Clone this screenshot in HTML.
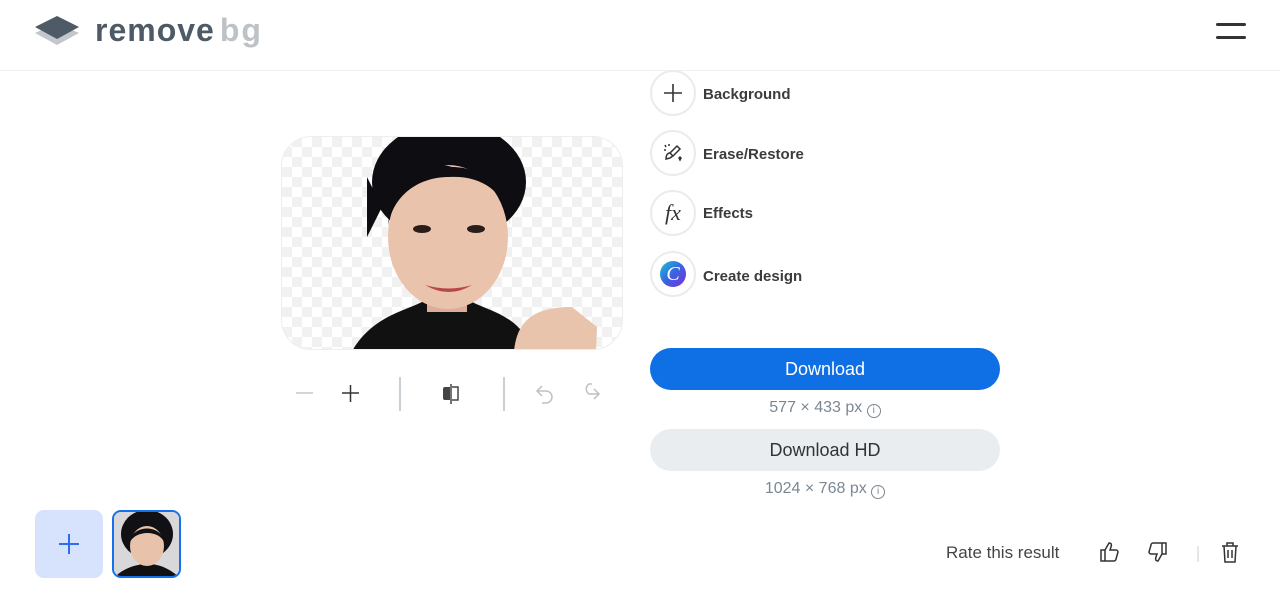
<!DOCTYPE html>
<html><head><meta charset="utf-8"><style>
*{margin:0;padding:0;box-sizing:border-box}
body{width:1280px;height:592px;background:#fff;font-family:"Liberation Sans",sans-serif;position:relative;overflow:hidden;color:#454545}
.hdr{position:absolute;left:0;top:0;width:1280px;height:71px;border-bottom:1px solid #f0f0f0}
.abs{position:absolute}
.circ{position:absolute;left:650px;width:46px;height:46px;border-radius:50%;border:2px solid #e9ecef;display:flex;align-items:center;justify-content:center}
.lbl{position:absolute;left:703px;font-size:15px;font-weight:bold;color:#3c3c3c}
.chk{background-color:#fff;background-image:linear-gradient(45deg,#f1f1f1 25%,transparent 25%,transparent 75%,#f1f1f1 75%),linear-gradient(45deg,#f1f1f1 25%,transparent 25%,transparent 75%,#f1f1f1 75%);background-size:20px 20px;background-position:0 0,10px 10px}
</style></head><body>
<div class="hdr"></div>
<svg class="abs" style="left:33px;top:14px" width="48" height="34" viewBox="0 0 48 34"><path d="M2 19 L24 9 L46 19 L24 31Z" fill="#c3c7cb"/><path d="M2 13 L24 2 L46 13 L24 25Z" fill="#4e5a65"/></svg>
<div class="abs" style="left:95px;top:12px;font-size:32px;font-weight:bold;color:#4e5a65;letter-spacing:1px">remove<span style="color:#bdc2c7;margin-left:5px;letter-spacing:2px">bg</span></div>
<div class="abs" style="left:1216px;top:23px;width:30px;height:3px;background:#333;border-radius:2px"></div>
<div class="abs" style="left:1216px;top:36px;width:30px;height:3px;background:#333;border-radius:2px"></div>

<div class="abs chk" style="left:281px;top:136px;width:342px;height:214px;border-radius:30px;overflow:hidden;border:1px solid #eee">
<svg width="342" height="214" viewBox="0 0 342 214" style="position:absolute;left:0;top:0">
<path d="M70 214 C90 180 120 175 140 165 L190 165 C210 175 240 180 250 214Z" fill="#111"/>
<path d="M232 214 C235 185 250 170 290 170 L315 190 L314 214Z" fill="#e8c4ad"/>
<rect x="145" y="130" width="40" height="45" fill="#dcae95"/>
<ellipse cx="167" cy="45" rx="77" ry="60" fill="#0d0d12"/>
<path d="M85 100 L85 40 L100 70Z" fill="#0d0d12"/>
<ellipse cx="166" cy="100" rx="60" ry="72" fill="#eac3ad"/>
<path d="M106 90 C110 40 140 20 170 30 C200 30 225 50 228 90 C225 55 200 38 167 40 C135 40 110 60 106 90Z" fill="#0d0d12"/>
<ellipse cx="140" cy="92" rx="9" ry="4" fill="#2a1d19"/><ellipse cx="194" cy="92" rx="9" ry="4" fill="#2a1d19"/>
<path d="M143 148 Q167 162 190 148 Q167 155 143 148Z" fill="#b5474a"/>
</svg></div>

<svg class="abs" style="left:280px;top:375px" width="340" height="38" viewBox="0 0 340 38">
<path d="M16 18h17" stroke="#c5c5c5" stroke-width="1.5"/>
<path d="M62 18h17M70.5 10v17" stroke="#333" stroke-width="1.5"/>
<path d="M120 2v34M224 2v34" stroke="#aeb5bc" stroke-width="1.3"/>
<path d="M170 12h-5a2 2 0 0 0-2 2v9a2 2 0 0 0 2 2h5z" fill="#444"/><path d="M172 12h6v13h-6" stroke="#444" stroke-width="1.5" fill="none"/><path d="M171 9v20" stroke="#444" stroke-width="1.5"/>
<path d="M262 11l-5 5 5 5M257 16h9a6 6 0 0 1 0 12h-4" stroke="#c0c0c0" stroke-width="1.5" fill="none"/>
<path d="M314 14l5 5-5 5M319 19h-10a6 6 0 0 1 0-10h3" stroke="#c0c0c0" stroke-width="1.5" fill="none"/>
</svg>

<div class="circ" style="top:70px"><svg width="20" height="20"><path d="M10 1v18M1 10h18" stroke="#333" stroke-width="1.6"/></svg></div>
<div class="lbl" style="top:86px">Background</div>
<div class="circ" style="top:130px"><svg width="24" height="24" viewBox="0 0 24 24" fill="none" stroke="#333" stroke-width="1.5"><path d="M16 5l3 3-7 7-3-3z"/><path d="M9 12c-3 0-4 3-4 6l4-1c2-1 3-3 3-3"/><path d="M4 4l1 2M3 9h2M8 3v2M20 17l-1 2-1-2 1-1z"/></svg></div>
<div class="lbl" style="top:146px">Erase/Restore</div>
<div class="circ" style="top:190px"><span style="font-family:'Liberation Serif',serif;font-style:italic;font-size:22px;color:#333">fx</span></div>
<div class="lbl" style="top:205px">Effects</div>
<div class="circ" style="top:251px"><div style="width:26px;height:26px;border-radius:50%;background:linear-gradient(135deg,#18c4d4,#3b63e0 50%,#7a2ee0);color:#fff;font-family:'Liberation Serif',serif;font-style:italic;font-size:20px;text-align:center;line-height:26px">C</div></div>
<div class="lbl" style="top:268px">Create design</div>

<div class="abs" style="left:650px;top:348px;width:350px;height:42px;border-radius:21px;background:#0f70e6;color:#fff;font-size:18px;text-align:center;line-height:42px">Download</div>
<div class="abs" style="left:650px;top:399px;width:350px;text-align:center;color:#7a8894;font-size:16px">577 × 433 px <span style="display:inline-block;width:14px;height:14px;border:1.3px solid #7a8894;border-radius:50%;font-size:10px;line-height:12px;vertical-align:-1px">i</span></div>
<div class="abs" style="left:650px;top:429px;width:350px;height:42px;border-radius:21px;background:#eaedf0;color:#333;font-size:18px;text-align:center;line-height:42px">Download HD</div>
<div class="abs" style="left:650px;top:480px;width:350px;text-align:center;color:#7a8894;font-size:16px">1024 × 768 px <span style="display:inline-block;width:14px;height:14px;border:1.3px solid #7a8894;border-radius:50%;font-size:10px;line-height:12px;vertical-align:-1px">i</span></div>

<div class="abs" style="left:35px;top:510px;width:68px;height:68px;border-radius:9px;background:#d7e3fd"><svg width="68" height="68"><path d="M34 24v20M24 34h20" stroke="#2e6cf0" stroke-width="2"/></svg></div>
<div class="abs" style="left:112px;top:510px;width:69px;height:68px;border-radius:9px;border:2px solid #1570ea;overflow:hidden;background:#dcdcdc">
<svg width="66" height="66" viewBox="0 0 66 66"><rect width="66" height="66" fill="#d8d8da"/><ellipse cx="33" cy="22" rx="26" ry="24" fill="#101015"/><path d="M0 66 C10 55 25 52 33 52 C45 52 55 56 66 66Z" fill="#111"/><ellipse cx="33" cy="34" rx="17" ry="20" fill="#e9c2ac"/><path d="M16 30 C18 12 48 12 50 30 C45 18 22 18 16 30Z" fill="#101015"/></svg></div>

<div class="abs" style="left:946px;top:543px;font-size:17px;color:#454545">Rate this result</div>
<svg class="abs" style="left:1098px;top:540px" width="150" height="26" viewBox="0 0 150 26" fill="none" stroke="#333" stroke-width="1.5">
<path d="M3 10h4v11H3zM7 10l4-7c2 0 3 1 2 4l-1 3h6c1 0 2 1 2 2l-2 7c0 1-1 2-2 2H7"/>
<path d="M64 3h4v11h-4zM64 14l-4 7c-2 0-3-1-2-4l1-3h-6c-1 0-2-1-2-2l2-7c0-1 1-2 2-2h9"/>
<path d="M100 6v16" stroke="#ddd"/>
<path d="M124 6h16M129 6V3h6v3M126 6l1 16h10l1-16M130 10v8M134 10v8"/>
</svg>
</body></html>
